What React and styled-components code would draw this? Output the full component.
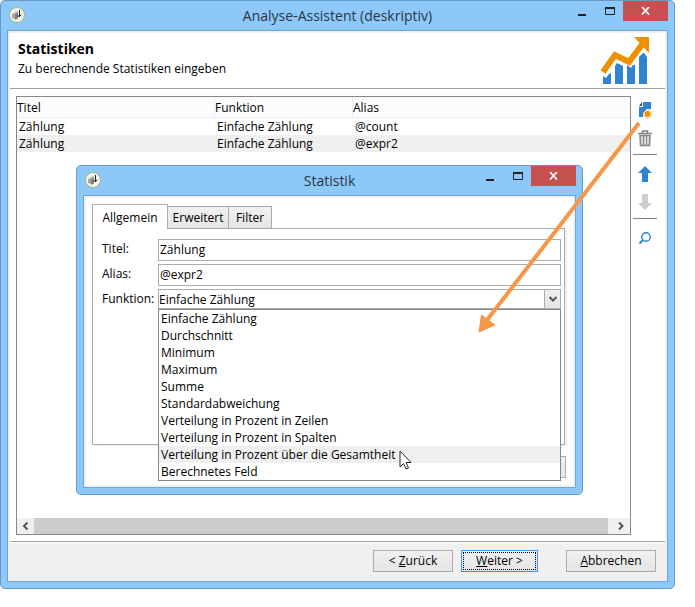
import React from "react";
import styled, { createGlobalStyle, css } from "styled-components";

const GlobalStyle = createGlobalStyle`
  *, *::before, *::after { box-sizing: border-box; }
  body {
    margin: 0;
    background: #fff;
    color: #000;
    font: 12px/17px "Open Sans", "Noto Sans", sans-serif;
  }
  button, input, select { font: inherit; color: inherit; }
`;

const Desktop = styled.main`
  display: flex;
  min-height: 100vh;
  padding: 0 20px 18px 0;
`;

const frame = css`
  display: flex;
  flex-direction: column;
  padding: 0 6px 6px;
  background: #8dc8fb;
  border: 1px solid #6899c5;
  border-radius: 5px;
`;

const Window = styled.section`
  ${frame}
  position: relative;
  flex: 1;
  min-width: 0;
`;

const Dialog = styled.section`
  ${frame}
  position: absolute;
  top: 164px;
  left: 75px;
  right: 91px;
`;

const TitleBar = styled.header`
  display: grid;
  grid-template-columns: 102px 1fr 102px;
  height: 29px;
  flex: none;
`;

const TitleIcon = styled.span`
  padding: 5px 0 0 1px;
`;

const Title = styled.h1`
  margin: 0;
  text-align: center;
  font-size: 14px;
  font-weight: 400;
  line-height: 29px;
  color: #2b3640;
  white-space: nowrap;
`;

const WindowControls = styled.div`
  display: flex;
  justify-content: flex-end;
  align-items: flex-start;
`;

const ControlButton = styled.button`
  display: grid;
  place-items: center;
  width: ${(p) => (p.$close ? 45 : 27)}px;
  height: 20px;
  padding: 0;
  border: 0;
  background: ${(p) => (p.$close ? "#c75050" : "transparent")};
`;

const Client = styled.div`
  display: flex;
  flex-direction: column;
  flex: 1;
  padding: 2px;
  border: 1px solid #6fa6d8;
  background: #f0f0f0;
`;

const Banner = styled.header`
  display: flex;
  justify-content: space-between;
  height: 56px;
  padding: 4px 15px 0 8px;
  background: #fff;
  border-bottom: 1px solid #a0a0a0;
`;

const Heading = styled.h2`
  margin: 2px 0 0;
  font-size: 14px;
  line-height: 20px;
  font-weight: 700;
`;

const Subheading = styled.p`
  margin: 1px 0 0;
`;

const Workspace = styled.div`
  display: flex;
  flex: 1;
  gap: 2px;
  padding: 7px 8px 6px 6px;
  background: #fff;
  border-bottom: 1px solid #a0a0a0;
`;

const ListFrame = styled.div`
  display: flex;
  flex-direction: column;
  justify-content: space-between;
  flex: 1;
  min-width: 0;
  border: 1px solid #828790;
`;

const Table = styled.table`
  width: 100%;
  table-layout: fixed;
  border-collapse: separate;
  border-spacing: 0;
`;

const Column = styled.col`
  width: ${(p) => p.$width};
`;

const HeadCell = styled.th`
  height: 21px;
  padding: 0;
  text-align: left;
  font-weight: 400;
  background: #fcfcfc;
  border-bottom: 1px solid #e3effb;
  & + & { border-left: 1px solid #e3effb; }
`;

const Row = styled.tr`
  background: ${(p) => (p.$selected ? "#f0f0f0" : "#fff")};
`;

const Cell = styled.td`
  height: 17px;
  padding: 0 2px;
  & + & { padding-left: 3px; }
`;

const ScrollBar = styled.div`
  display: grid;
  grid-template-columns: 17px 1fr 22px;
  height: 16px;
  background: #f0f0f0;
`;

const ScrollButton = styled.button`
  display: grid;
  place-items: center;
  padding: 0;
  border: 0;
  background: transparent;
`;

const ScrollThumb = styled.div`
  background: #cdcdcd;
`;

const Tools = styled.nav`
  display: flex;
  flex-direction: column;
  align-items: center;
  width: 24px;
`;

const ToolButton = styled.button`
  display: grid;
  place-items: center;
  width: 24px;
  height: 28px;
  padding: 0;
  border: 0;
  background: transparent;
`;

const ToolRule = styled.hr`
  width: 100%;
  margin: 2px 0 5px;
  border: 0;
  border-top: 1px solid #828282;
`;

const Footer = styled.footer`
  display: flex;
  justify-content: flex-end;
  gap: 8px;
  padding: 7px 9px 7px;
  border-top: 1px solid #fff;
`;

const PushButton = styled.button`
  width: ${(p) => (p.$wide ? 90 : 80)}px;
  height: 22px;
  margin-left: ${(p) => (p.$apart ? 20 : 0)}px;
  padding: 0;
  line-height: 18px;
  border: 1px solid #acacac;
  background: linear-gradient(#f0f0f0, #e5e5e5);
  ${(p) =>
    p.$primary &&
    css`
      width: 77px;
      border-color: #3399ff;
      outline: 1px dotted #000;
      outline-offset: -3px;
    `}
`;

const DialogBody = styled.div`
  padding: 6px 8px 7px 6px;
  background: #fff;
`;

const Tabs = styled.div`
  display: flex;
  align-items: flex-end;
`;

const Tab = styled.button`
  height: ${(p) => (p.$active ? 25 : 22)}px;
  width: ${(p) => p.$width}px;
  margin: 0 0 ${(p) => (p.$active ? -1 : 0)}px ${(p) => (p.$joined ? -1 : 0)}px;
  padding: 0;
  border: 1px solid #acacac;
  border-bottom: 0;
  background: ${(p) => (p.$active ? "#fff" : "linear-gradient(#f0f0f0, #e5e5e5)")};
`;

const TabPanel = styled.div`
  display: grid;
  grid-template-columns: 56px 1fr;
  grid-auto-rows: 22px;
  row-gap: 3px;
  align-items: start;
  height: 217px;
  padding: 10px 3px 0 9px;
  border: 1px solid #acacac;
  box-shadow: 2px 1px 0 #f0f0f0;
`;

const Label = styled.label`
  line-height: 20px;
`;

const TextBox = styled.input`
  width: 100%;
  min-width: 0;
  height: 22px;
  padding: 0 2px 2px 1px;
  border: 1px solid #acacac;
  border-radius: 0;
  background: #fff;
`;

const Combo = styled.div`
  position: relative;
  display: flex;
  height: 20px;
  border: 1px solid #acacac;
`;

const Select = styled.select`
  flex: 1;
  min-width: 0;
  padding: 0;
  border: 0;
  appearance: none;
  background: transparent;
`;

const ComboArrow = styled.span`
  display: grid;
  place-items: center;
  width: 16px;
  border-left: 1px solid #acacac;
  background: linear-gradient(#f0f0f0, #e5e5e5);
`;

const Options = styled.ul`
  position: absolute;
  top: 19px;
  left: -1px;
  right: -1px;
  z-index: 2;
  margin: 0;
  padding: 0;
  list-style: none;
  border: 1px solid #828790;
  background: #fff;
`;

const Option = styled.li`
  padding: 0 2px;
  background: ${(p) => (p.$hover ? "#f0f0f0" : "#fff")};
`;

const DialogActions = styled.div`
  display: flex;
  justify-content: flex-end;
  margin: 11px -1px 0 0;
`;

const Pointer = styled.svg`
  position: absolute;
  top: 160px;
  left: 240px;
  z-index: 3;
`;

const Callout = styled.svg`
  position: absolute;
  top: 120px;
  right: 32px;
  z-index: 4;
  pointer-events: none;
`;

const AppIcon = () => (
  <svg width="18" height="18" viewBox="0 0 18 18" aria-hidden="true">
    <circle cx="9" cy="9" r="7.5" fill="#f4f5f2" stroke="#a4bb68" />
    <path d="M4 8l3-1v6l-3-1z" fill="#a5a5a1" />
    <path d="M5 7l3-2 2 .5L7 8z" fill="#c9c9c5" />
    <path d="M7 8l3-2.500v7L7 14z" fill="#83837f" />
    <path d="M11.500 4v7M9.500 10h2.500l1.500-1.500" fill="none" stroke="#222" />
  </svg>
);

const ChartLogo = () => (
  <svg width="50" height="48" viewBox="0 0 50 48" aria-hidden="true">
    <path
      fill="#2f83d0"
      d="M3 39l3 2 3-4 2-1v11H3zM15 29l2-3 6 3v18h-8zM27 28l4 3 2-3h2v19h-8zM39 20l4-4h1l3 4v27h-8z"
    />
    <path d="M3 35L15 18L29 25L44 5" fill="none" stroke="#ef9000" strokeWidth="6" />
    <path d="M34 0H49v16z" fill="#ef9000" />
  </svg>
);

const NewIcon = () => (
  <svg width="14" height="18" viewBox="0 0 14 18" aria-hidden="true">
    <path d="M5 1h8v7H9l-4 4v4H1V6h4z" fill="#2f83d0" />
    <path d="M1 5l3-4v4z" fill="#1c568e" />
    <circle cx="9.500" cy="13" r="4" fill="none" stroke="#f2a72b" strokeDasharray="1.570 1.570" />
    <circle cx="9.500" cy="13" r="3" fill="#ef9000" />
  </svg>
);

const TrashIcon = () => (
  <svg width="14" height="17" viewBox="0 0 14 17" fill="none" stroke="#858585" aria-hidden="true">
    <path d="M0 3.500h14M4.500 3V1h5v2" strokeWidth="1.500" />
    <path d="M2 5.500h10l-.5 10h-9z" fill="#d9d9d9" strokeWidth="1.500" />
    <path d="M5.500 6v9M8.500 6v9" />
  </svg>
);

const BlockArrow = ({ down }) => (
  <svg width="14" height="16" viewBox="0 0 14 16" aria-hidden="true">
    <path
      d={down ? "M4 0h6v9h4l-7 7-7-7h4z" : "M7 0l7 7h-4v9H4V7H0z"}
      fill={down ? "#cecece" : "#2f83d0"}
    />
  </svg>
);

const SearchIcon = () => (
  <svg width="14" height="13" viewBox="0 0 14 13" fill="none" stroke="#2f83d0" aria-hidden="true">
    <circle cx="8" cy="5" r="4.200" strokeWidth="1.400" />
    <path d="M5 8L1.500 11.500" strokeWidth="2" />
  </svg>
);

const Chevron = ({ d, size = 10 }) => (
  <svg width={size} height={size} viewBox="0 0 10 10" fill="none" stroke="#555" strokeWidth="2" aria-hidden="true">
    <path d={d} />
  </svg>
);

const Controls = () => (
  <WindowControls>
    <ControlButton aria-label="Minimieren">
      <svg width="9" height="10"><path d="M0 9h8" stroke="#222" strokeWidth="2" /></svg>
    </ControlButton>
    <ControlButton aria-label="Maximieren">
      <svg width="10" height="8">
        <path d="M.5 1v6.500h9V1" fill="none" stroke="#222" />
        <path d="M0 1h10" stroke="#222" strokeWidth="2" />
      </svg>
    </ControlButton>
    <ControlButton $close aria-label="Schließen">
      <svg width="9" height="8"><path d="M1 0l7 7.500M8 0L1 7.500" stroke="#fff" strokeWidth="1.700" /></svg>
    </ControlButton>
  </WindowControls>
);

const FrameTitle = ({ children }) => (
  <TitleBar>
    <TitleIcon><AppIcon /></TitleIcon>
    <Title>{children}</Title>
    <Controls />
  </TitleBar>
);

const rows = [
  { title: "Zählung", fn: "Einfache Zählung", alias: "@count" },
  { title: "Zählung", fn: "Einfache Zählung", alias: "@expr2" },
];

const functions = [
  "Einfache Zählung",
  "Durchschnitt",
  "Minimum",
  "Maximum",
  "Summe",
  "Standardabweichung",
  "Verteilung in Prozent in Zeilen",
  "Verteilung in Prozent in Spalten",
  "Verteilung in Prozent über die Gesamtheit",
  "Berechnetes Feld",
];

const StatisticDialog = () => (
  <Dialog role="dialog" aria-label="Statistik">
    <FrameTitle>Statistik</FrameTitle>
    <Client>
      <DialogBody>
        <Tabs role="tablist">
          <Tab role="tab" aria-selected="true" $active $width={76}>Allgemein</Tab>
          <Tab role="tab" aria-selected="false" $joined $width={62}>Erweitert</Tab>
          <Tab role="tab" aria-selected="false" $joined $width={44}>Filter</Tab>
        </Tabs>
        <TabPanel role="tabpanel">
          <Label htmlFor="stat-title">Titel:</Label>
          <TextBox id="stat-title" defaultValue="Zählung" />
          <Label htmlFor="stat-alias">Alias:</Label>
          <TextBox id="stat-alias" defaultValue="@expr2" />
          <Label htmlFor="stat-function">Funktion:</Label>
          <Combo>
            <Select id="stat-function" defaultValue={functions[0]}>
              {functions.map((name) => <option key={name}>{name}</option>)}
            </Select>
            <ComboArrow><Chevron d="M1.500 3L5 6.500L8.500 3" /></ComboArrow>
            <Options role="listbox" aria-label="Funktion">
              {functions.map((name, i) => (
                <Option key={name} role="option" aria-selected={i === 0} $hover={i === 8}>{name}</Option>
              ))}
            </Options>
            <Pointer width="13" height="20" viewBox="0 0 13 20" aria-hidden="true">
              <path d="M1 1v16l3.500-3.500 2.500 5.500 2.500-1-2.500-5.500h5z" fill="#fff" stroke="#222433" />
            </Pointer>
          </Combo>
        </TabPanel>
        <DialogActions>
          <PushButton aria-label="Abbrechen" />
        </DialogActions>
      </DialogBody>
    </Client>
  </Dialog>
);

export default function App() {
  return (
    <Desktop>
      <GlobalStyle />
      <Window>
        <FrameTitle>Analyse-Assistent (deskriptiv)</FrameTitle>
        <Client>
          <Banner>
            <div>
              <Heading>Statistiken</Heading>
              <Subheading>Zu berechnende Statistiken eingeben</Subheading>
            </div>
            <ChartLogo />
          </Banner>
          <Workspace>
            <ListFrame>
              <Table>
                <colgroup>
                  <Column $width="197px" />
                  <Column $width="138px" />
                  <Column $width="auto" />
                </colgroup>
                <thead>
                  <tr>
                    <HeadCell>Titel</HeadCell>
                    <HeadCell>Funktion</HeadCell>
                    <HeadCell>Alias</HeadCell>
                  </tr>
                </thead>
                <tbody>
                  {rows.map((row, i) => (
                    <Row key={row.alias} $selected={i === 1}>
                      <Cell>{row.title}</Cell>
                      <Cell>{row.fn}</Cell>
                      <Cell>{row.alias}</Cell>
                    </Row>
                  ))}
                </tbody>
              </Table>
              <ScrollBar>
                <ScrollButton aria-label="Nach links"><Chevron d="M6.500 1.500L3 5l3.500 3.500" /></ScrollButton>
                <ScrollThumb />
                <ScrollButton aria-label="Nach rechts"><Chevron d="M5 1.500L8.500 5L5 8.500" /></ScrollButton>
              </ScrollBar>
            </ListFrame>
            <Tools aria-label="Werkzeuge">
              <ToolButton aria-label="Neu"><NewIcon /></ToolButton>
              <ToolButton aria-label="Löschen"><TrashIcon /></ToolButton>
              <ToolRule />
              <ToolButton aria-label="Nach oben"><BlockArrow /></ToolButton>
              <ToolButton aria-label="Nach unten"><BlockArrow down /></ToolButton>
              <ToolRule />
              <ToolButton aria-label="Suchen"><SearchIcon /></ToolButton>
            </Tools>
          </Workspace>
          <Footer>
            <PushButton>&lt; <u>Z</u>urück</PushButton>
            <PushButton $primary><u>W</u>eiter &gt;</PushButton>
            <PushButton $wide $apart><u>A</u>bbrechen</PushButton>
          </Footer>
        </Client>
        <StatisticDialog />
        <Callout width="164" height="214" viewBox="0 0 164 214" aria-hidden="true">
          <path d="M161 2L9 199" stroke="#f79646" strokeWidth="4" />
          <path d="M1 211L3.500 194L17 204z" fill="#f79646" stroke="#f79646" />
        </Callout>
      </Window>
    </Desktop>
  );
}
